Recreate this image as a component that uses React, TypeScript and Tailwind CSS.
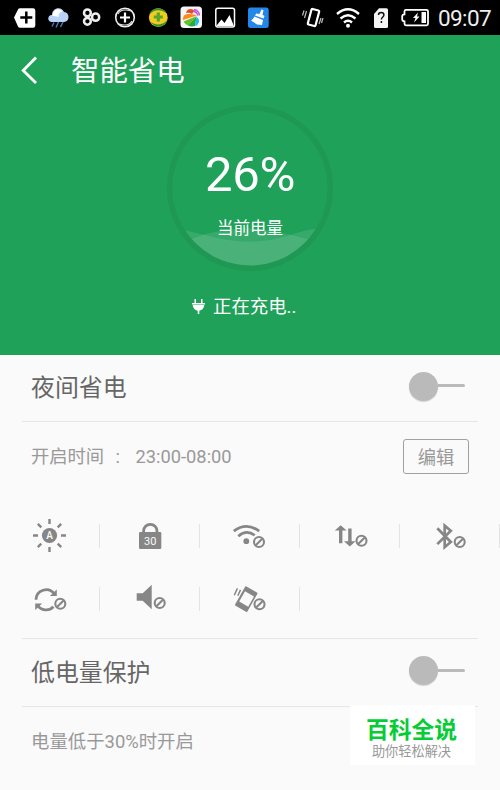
import type { ReactNode } from "react";

const Ban = ({ x, y }: { x: number; y: number }) => (
  <g fill="none" stroke="#868686" strokeWidth="2.1">
    <circle cx={x} cy={y} r="5" />
    <path d={`M${x - 3.3} ${y + 3.3}l6.6 -6.6`} />
  </g>
);

const modes: { name: string; icon: ReactNode }[] = [
  {
    name: "brightness",
    icon: (
      <>
        <circle cx="21.5" cy="17.5" r="7.6" />
        <g stroke="#868686" strokeWidth="2.4">
          <path d="M21.5 1v5M21.5 29v5M5 17.5h5M33 17.5h5M9.8 5.8l3.5 3.5M29.7 25.7l3.5 3.5M9.8 29.2l3.5-3.5M29.7 9.3l3.5-3.5" />
        </g>
        <text x="21.5" y="21" fontSize="10" fontWeight="500" textAnchor="middle" fill="#fafafa">A</text>
      </>
    ),
  },
  {
    name: "lock",
    icon: (
      <>
        <path d="M15.6 15v-2a6.7 6.7 0 0 1 13.4 0v2" fill="none" stroke="#868686" strokeWidth="2.8" />
        <rect x="11" y="14" width="22.3" height="17" rx="1.2" />
        <text x="22.2" y="27.2" fontSize="11" textAnchor="middle" fill="#fafafa">30</text>
      </>
    ),
  },
  {
    name: "wifi",
    icon: (
      <>
        <circle cx="18.3" cy="23.2" r="2.9" />
        <path d="M5.8 13.2Q18.5 3.6 31.2 13.2M10.3 18.2Q18.5 11 26.7 17.3" fill="none" stroke="#868686" strokeWidth="2.7" />
        <Ban x={31} y={24} />
      </>
    ),
  },
  {
    name: "data",
    icon: (
      <>
        <path d="M12.7 7.2l5.9 5.4h-4.2v12.7h-3.4V12.6H6.8zM20.2 10.6h3.4v12.6h4l-5.8 5.4-5.8-5.4h4.2z" />
        <Ban x={33.5} y={22.7} />
      </>
    ),
  },
  {
    name: "bluetooth",
    icon: (
      <>
        <path d="M9.3 10.3L22.8 24l-6.1 5.2V7.6l6.1 5.2L9.3 26.1" fill="none" stroke="#868686" strokeWidth="2.7" />
        <Ban x={31.7} y={24} />
      </>
    ),
  },
  {
    name: "sync",
    icon: (
      <>
        <path d="M8 18.7A10.2 10.2 0 0 1 26.3 12.8M25.5 25.8A10.2 10.2 0 0 1 9.4 24" fill="none" stroke="#868686" strokeWidth="2.8" />
        <path d="M28.8 8.5V15h-6.9zM7.2 22.4h6.9l-6.9 6.6z" />
        <Ban x={32.3} y={22.7} />
      </>
    ),
  },
  {
    name: "volume",
    icon: (
      <>
        <path d="M8.7 12.3h6l9-8.6v24.6l-9-8.6h-6z" />
        <Ban x={31.7} y={22} />
      </>
    ),
  },
  {
    name: "vibrate",
    icon: (
      <>
        <path fillRule="evenodd" d="M18.5 5.4l10.4 6q.9.6.4 1.5l-9.9 17.5q-.5.8-1.4.3L7.6 24.7q-.9-.5-.4-1.4l9.9-17.5q.5-.8 1.4-.4zM17 10.3l-5.8 10.2 9 5.2L26 15.5z" />
        <path d="M9.4 7.4L6.3 14.2M12.5 8.9L9.8 14.8" stroke="#868686" strokeWidth="1.5" />
        <Ban x={31.5} y={23.3} />
      </>
    ),
  },
];

const Mode = ({ icon }: { icon: ReactNode }) => (
  <div className="relative flex h-[63px] w-[100px] shrink-0 items-center justify-center">
    <svg className="h-9 w-11 font-['Roboto']" viewBox="0 0 44 36" fill="#868686">
      {icon}
    </svg>
    <span className="absolute top-[19px] right-0 h-6 w-px bg-[#e3e3e3]" />
  </div>
);

const Toggle = () => (
  <div className="mb-[3px] flex w-14 items-center">
    <span className="size-[29px] shrink-0 rounded-full bg-[#bababa] shadow-[0_1px_1px_rgba(0,0,0,0.15)]" />
    <span className="-mt-px h-[3px] flex-1 rounded-r-sm bg-[#bababa]" />
  </div>
);

const StatusBar = () => (
  <div className="flex h-[35px] bg-black">
    <svg className="h-[35px] w-[435px]" viewBox="0 0 435 35" fill="none">
      {/* back tag with plus */}
      <path d="M14 17.5l4-8q.6-1.3 2-1.3h13q2.3 0 2.3 2.3v15q0 2.3-2.3 2.3H20q-1.4 0-2-1.3z" fill="#fff" />
      <path d="M26.3 11.5v12M20.3 17.5h12" stroke="#000" strokeWidth="2.5" />

      {/* rain cloud */}
      <path d="M52 22c-5 0-5-7 0-7 0-8 10-9 12-3 6 0 6 10 0 10z" fill="#b9d2f8" />
      <path d="M52.5 16c0-7 8-9 10-4-3 0-4 2-4 5-2-1-5-1-6-1z" fill="#fff" />
      <path d="M54 22.5l-2 4M58.5 22L56 27.5M63 22l-2.5 5" stroke="#477bb8" strokeWidth="1.4" />

      {/* linked circles */}
      <g stroke="#eee" strokeWidth="2.5">
        <circle cx="87.4" cy="12.9" r="3.4" />
        <circle cx="87.4" cy="21.3" r="3.4" />
        <circle cx="95.6" cy="17.2" r="3.6" />
      </g>

      {/* circled plus */}
      <circle cx="125" cy="17.5" r="9.3" stroke="#eee" strokeWidth="1.6" />
      <path d="M118 14q3-6 13-3M132 21q-3 6-13 3" stroke="#ddd" strokeWidth="1.2" />
      <path d="M125 12.5v10M120 17.5h10" stroke="#fff" strokeWidth="2.2" />

      {/* yellow-green ball */}
      <circle cx="158.3" cy="17.6" r="9.4" fill="#f1cb22" />
      <path d="M149.5 14.5C151 7 163 6 166.5 13.5 161 9 154 9 149.5 14.5zM167.5 19.5c-1 8-13 10-17 2.5 6 4 13 3 17-2.5z" fill="#3e8f2c" />
      <path d="M158.3 12.5v9M153.8 17h9" stroke="#58a52c" strokeWidth="3.2" />

      {/* colour fan */}
      <rect x="180.5" y="6.5" width="21.5" height="21.5" rx="3.5" fill="#f6f6f6" />
      <path d="M186 13q1-4 4.500-4 2.500 0 4 1.500L192 14q-3-2-6-1z" fill="#f0472c" />
      <path d="M183 20q-.5-6 5-6 5-.5 9 1.500z" fill="#ff8b16" />
      <path d="M183.5 21.5L197 16l-9 9.5q-3-1-4.5-4z" fill="#66bf28" />
      <path d="M188 25.5l8.5-9L195 26q-4 1-7-.5z" fill="#25ac3a" />
      <path d="M196.5 17q3 2 2.500 5l-2 3.500h-2z" fill="#22b6ee" />
      <path d="M194 9.5q5 1 5.500 6M193.500 11.500q3 0 4.500 4" stroke="#c84bd9" strokeWidth="1.3" />

      {/* picture */}
      <rect x="215.8" y="8.2" width="18.7" height="18.7" rx="2" stroke="#fff" strokeWidth="1.5" />
      <path d="M217 26v-1l4.5-5.5 3 3.5 5-8 4 10v1z" fill="#fff" />

      {/* cleaner */}
      <rect x="248" y="7.5" width="20.7" height="20.5" rx="2.5" fill="#2387e8" />
      <path d="M261.5 9.5l2 .8-1 4.4 2 1.3-1 2.5-8.5-3 1.2-2 3.3.5zM254.5 16.5l8.5 3.5-1 5-5-.5-6-4q2-1 3.5-4z" fill="#fff" />

      {/* vibrate */}
      <rect x="309.5" y="9.5" width="8" height="16" rx="1" stroke="#fff" strokeWidth="2.2" transform="rotate(15 313.5 17.5)" />
      <path d="M306.5 11l-2 7M304 10.5l-1.5 5M321 18l-2 6M323 18l-1.5 5" stroke="#bbb" strokeWidth="1.2" />

      {/* wifi */}
      <path d="M337 14q11-9.5 22 0M340.5 18.5q7.5-6.5 15 0M344 22.5q4-3.5 8 0" stroke="#fff" strokeWidth="2.4" />
      <circle cx="348" cy="25.8" r="2" fill="#fff" />

      {/* sim card */}
      <path d="M379 8.2h7.5q1.5 0 1.5 1.5v17q0 1.3-1.5 1.3h-11q-1.5 0-1.5-1.3V14z" fill="#f4f4f4" />
      <path d="M378.5 15q0-2.5 2.7-2.5t2.7 2.5c0 2-2.5 2-2.5 4.5M381.4 21v2" stroke="#111" strokeWidth="1.5" />

      {/* battery */}
      <path d="M406 9.800h20.500q1.500 0 1.500 1.500v12.500q0 1.500-1.500 1.500H406q-1.500 0-1.500-1.500v-2.500q-2.300 0-2.300-2v-3q0-2 2.300-2v-3q0-1.500 1.500-1.500z" stroke="#fff" strokeWidth="1.8" />
      <path d="M421.5 12h4.5v11h-4.5zM418 12.5l-5 5.5h2.5l-1.5 4.5 5.5-6H417z" fill="#fff" />
    </svg>
    <span className="ml-[3px] font-['Roboto'] text-[22.5px] leading-[37px] tracking-[-0.6px] text-[#eee]">09:07</span>
  </div>
);

export default function App() {
  return (
    <div className="relative h-[790px] w-[500px] overflow-hidden bg-[#fafafa] font-['Roboto','Noto_Sans_CJK_SC',sans-serif]">
      <StatusBar />

      {/* Battery header */}
      <header className="h-[319.5px] bg-[#20a15a] text-white">
        <div className="flex h-[70px] items-center">
          <svg className="ml-5 h-7 w-5" viewBox="0 0 20 28" fill="none" stroke="#fff" strokeWidth="2.8">
            <path d="M16 1.5L3.2 14.5 16 27" />
          </svg>
          <h1 className="mt-1 ml-[31px] text-[28.4px] leading-none">智能省电</h1>
        </div>

        <div className="relative mx-auto h-[166px] w-[166px]">
          <svg className="absolute inset-0" viewBox="0 0 166 166">
            <defs>
              <clipPath id="gauge">
                <circle cx="83" cy="83" r="78" />
              </clipPath>
            </defs>
            {/* two crossing waves */}
            <g clipPath="url(#gauge)" fill="#fff">
              <path d="M10 123Q20 126 38 130 83 143 120 131 140 124 156 123V166H10z" fillOpacity="0.1" />
              <path d="M20 136Q40 127 60 125 83 121 106 126 126 130 144 135V166H20z" fillOpacity="0.1" />
            </g>
            <circle cx="83" cy="83" r="80.3" fill="none" stroke="#1f9853" strokeWidth="5.5" />
          </svg>
          <div className="relative flex flex-col items-center pt-[45px]">
            <span className="text-[49px] leading-[50px] tracking-[-0.3px]">26%</span>
            <span className="mt-[19px] text-[16.5px] leading-5">当前电量</span>
          </div>
        </div>

        <div className="mt-[23px] ml-[191px] flex items-center">
          <svg className="h-4 w-[15px]" viewBox="0 0 15 16" fill="#fff">
            <path d="M3.5 0H5v4h5V0h1.5v4H14v1.5H1V4h2.500zM1.700 6h11.600q-.4 4.500-5 5.800V15H6.700v-3.200Q2.100 10.500 1.700 6z" />
          </svg>
          <span className="mt-px ml-[7px] text-[18.4px] leading-6">正在充电..</span>
        </div>
      </header>

      {/* Night saving */}
      <section className="mx-[22px]">
        <div className="flex h-[67px] items-center justify-between border-b border-[#e6e6e6] pr-[13px] pl-[9px]">
          <h2 className="mt-0.5 text-[23.9px] leading-none text-[#666]">夜间省电</h2>
          <Toggle />
        </div>
        <div className="flex h-[70px] items-center justify-between pr-[9px] pl-[9px] text-[18.3px] text-[#999]">
          <span className="mt-px flex">
            <span className="w-[84.5px]">开启时间</span>
            <span className="w-5">:</span>
            <span>23:00-08:00</span>
          </span>
          <button className="h-[35px] w-[66px] rounded-[3px] border-[1.5px] border-[#a0a0a0] pt-[3px] leading-none">编辑</button>
        </div>
      </section>

      <div className="mt-[13px] flex w-[500px] flex-wrap">
        {modes.map((m) => (
          <Mode key={m.name} icon={m.icon} />
        ))}
      </div>

      {/* Low battery protection */}
      <section className="mx-[22px] mt-[7px] border-t border-[#e6e6e6]">
        <div className="flex h-[68px] items-center justify-between border-b border-[#e6e6e6] pr-[13px] pl-[9px]">
          <h2 className="mt-[3px] text-[23.9px] leading-none text-[#666]">低电量保护</h2>
          <Toggle />
        </div>
        <p className="flex h-[71px] items-center pl-[9px] text-[18.4px] text-[#999]">电量低于30%时开启</p>
      </section>

      <div className="absolute top-[705px] left-[350px] flex h-[60px] w-[125px] flex-col items-center bg-white pt-[14px] pr-0.5">
        <span className="text-[22.8px] leading-6 font-bold text-[#06cd35]">百科全说</span>
        <span className="mt-px text-[13.2px] leading-4 text-[#999]">助你轻松解决</span>
      </div>
    </div>
  );
}
